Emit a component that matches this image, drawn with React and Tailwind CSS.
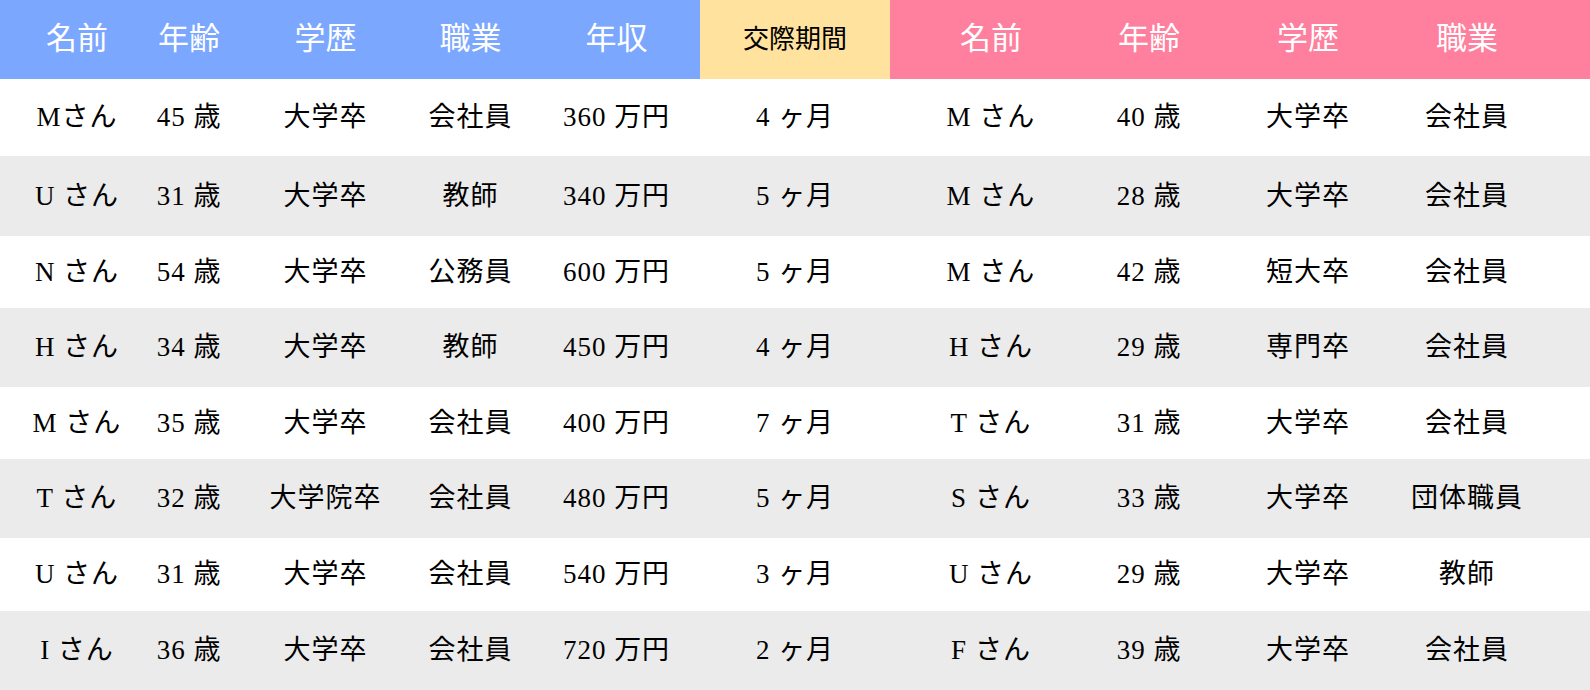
import React from "react";

const left = [
  ["Mさん", "45 歳", "大学卒", "会社員", "360 万円", "4 ヶ月", "M さん", "40 歳", "大学卒", "会社員"],
  ["U さん", "31 歳", "大学卒", "教師", "340 万円", "5 ヶ月", "M さん", "28 歳", "大学卒", "会社員"],
  ["N さん", "54 歳", "大学卒", "公務員", "600 万円", "5 ヶ月", "M さん", "42 歳", "短大卒", "会社員"],
  ["H さん", "34 歳", "大学卒", "教師", "450 万円", "4 ヶ月", "H さん", "29 歳", "専門卒", "会社員"],
  ["M さん", "35 歳", "大学卒", "会社員", "400 万円", "7 ヶ月", "T さん", "31 歳", "大学卒", "会社員"],
  ["T さん", "32 歳", "大学院卒", "会社員", "480 万円", "5 ヶ月", "S さん", "33 歳", "大学卒", "団体職員"],
  ["U さん", "31 歳", "大学卒", "会社員", "540 万円", "3 ヶ月", "U さん", "29 歳", "大学卒", "教師"],
  ["I さん", "36 歳", "大学卒", "会社員", "720 万円", "2 ヶ月", "F さん", "39 歳", "大学卒", "会社員"],
];

const pad = [
  "pl-[21px]",
  "pr-[12px]",
  "pr-[4px]",
  "",
  "pr-[10px]",
  "",
  "pl-[22px]",
  "",
  "",
  "pr-[44px]",
];

const headers = ["名前", "年齢", "学歴", "職業", "年収", "交際期間", "名前", "年齢", "学歴", "職業"];

export default function App() {
  return (
    <div className="w-[1590px] h-[690px] bg-white font-['Liberation_Serif','Noto_Sans_CJK_JP',serif] text-black">
      <div className="grid grid-cols-[133px_124px_141px_145px_157px_190px_180px_158px_160px_202px] grid-rows-[79px_77px_80px_72px_79px_72px_79px_73px_79px]">
        {headers.map((h, i) => {
          const bg =
            i < 5
              ? "bg-[#7ba7ff] text-white text-[31px]"
              : i === 5
              ? "bg-[#ffe29e] text-black text-[26px]"
              : "bg-[#ff7f9e] text-white text-[31px]";
          return (
            <div key={"h" + i} className={`flex items-center justify-center whitespace-nowrap ${bg} ${pad[i]}`}>
              {h}
            </div>
          );
        })}
        {left.map((row, r) =>
          row.map((c, i) => (
            <div
              key={r + "-" + i}
              className={`flex items-center justify-center whitespace-nowrap text-[27px] tracking-[1px] ${
                r % 2 === 1 ? "bg-[#ebebeb]" : "bg-white"
              } ${pad[i]}`}
            >
              {c}
            </div>
          ))
        )}
      </div>
    </div>
  );
}
